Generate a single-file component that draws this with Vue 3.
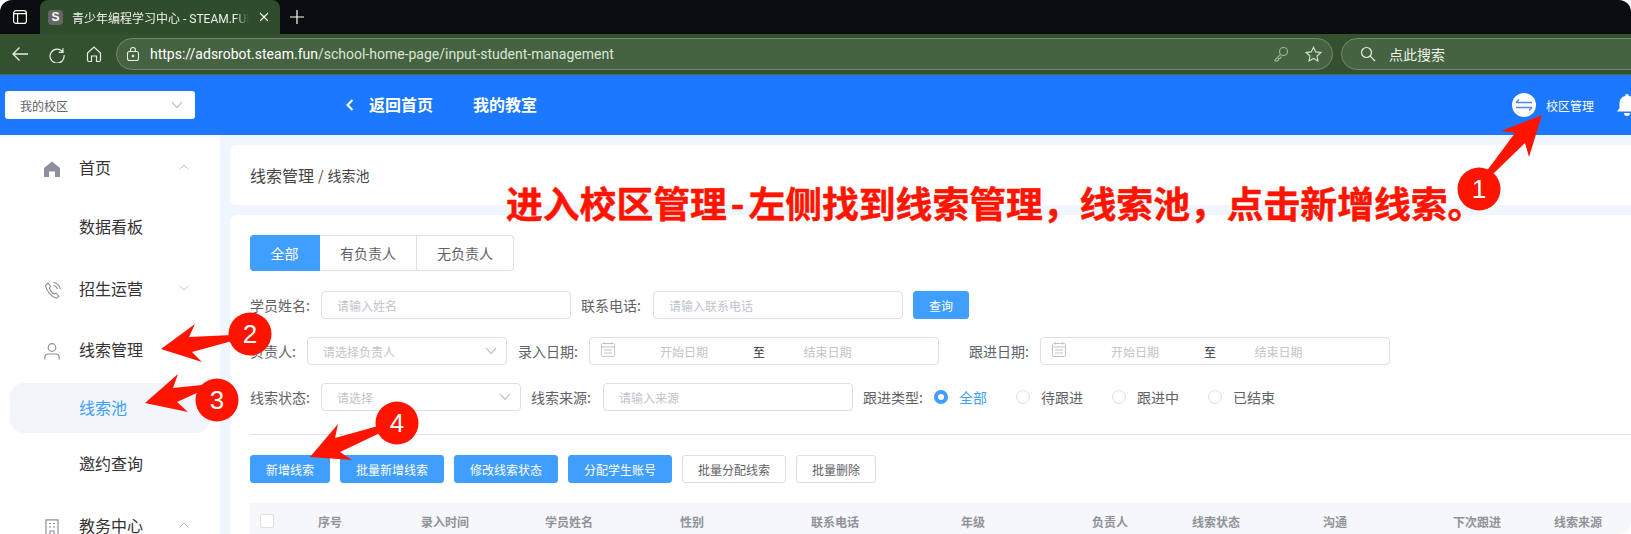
<script setup>
const menu = [
  { text: '首页', icon: 'home', arrow: 'up' },
  { text: '数据看板', sub: true },
  { text: '招生运营', icon: 'phone', arrow: 'down' },
  { text: '线索管理', icon: 'user' },
  { text: '线索池', sub: true, active: true },
  { text: '邀约查询', sub: true },
  { text: '教务中心', icon: 'building', arrow: 'up' }
]
const columns = ['序号', '录入时间', '学员姓名', '性别', '联系电话', '年级', '负责人', '线索状态', '沟通', '下次跟进', '线索来源']
const radios = ['全部', '待跟进', '跟进中', '已结束']
const primaryActions = ['新增线索', '批量新增线索', '修改线索状态', '分配学生账号']
const plainActions = ['批量分配线索', '批量删除']
const markers = [
  { n: 1, cx: 1479, cy: 189, arrow: '1542,115 1501,131 1515,133 1486,172 1494,173 1525,143 1529,157' },
  { n: 2, cx: 250, cy: 334, arrow: '161,349 195,324 189,337 232,335 232,341 192,352 202,362' },
  { n: 3, cx: 217, cy: 400, arrow: '145,403 178,374 173,388 202,385 199,392 177,402 188,412' },
  { n: 4, cx: 397, cy: 423, arrow: '310,457 338,424 335,438 378,426 380,433 340,452 352,460' }
]
</script>

<template>
  <div class="window">
    <div class="tabbar">
      <svg class="panel-icon" width="16" height="16" viewBox="0 0 16 16" fill="none" stroke="#fff" stroke-width="1.2">
        <rect x="1.6" y="1.6" width="12.8" height="12.8" rx="2.5" />
        <path d="M1.6 4.6h12.8M5.6 4.6v9.8" />
      </svg>
      <div class="tab">
        <span class="favicon">S</span>
        <span class="tab-title">青少年编程学习中心 - STEAM.FUN</span>
        <svg class="tab-close" width="10" height="10" viewBox="0 0 10 10" stroke="#fff" stroke-width="1.1"><path d="M1 1l8 8M9 1l-8 8" /></svg>
      </div>
      <svg class="tab-add" width="16" height="16" viewBox="0 0 16 16" stroke="#fff" stroke-width="1.2"><path d="M8 1v14M1 8h14" /></svg>
    </div>

    <div class="toolbar">
      <svg class="tool first" width="18" height="18" viewBox="0 0 18 18" fill="none" stroke="#e8ede6" stroke-width="1.3"><path d="M17 9H2M8.5 2.5L2 9l6.5 6.5" /></svg>
      <svg class="tool" width="18" height="18" viewBox="0 0 18 18" fill="none" stroke="#e8ede6" stroke-width="1.2"><path d="M15 3.2v4.2h-4.2M15 7.4A7 7 0 1 0 16 10" /></svg>
      <svg class="tool" width="18" height="18" viewBox="0 0 18 18" fill="none" stroke="#e8ede6" stroke-width="1.2"><path d="M2.5 8L9 2l6.5 6v7a1.5 1.5 0 0 1-1.5 1.5h-2.5V11h-5v5.500H4A1.500 1.500 0 0 1 2.500 15z" /></svg>
      <div class="address">
        <svg width="14" height="16" viewBox="0 0 14 16" fill="none" stroke="#e8ede6" stroke-width="1.1"><rect x="1.500" y="5.500" width="11" height="9" rx="2" /><path d="M4.500 5.500V4a2.500 2.500 0 0 1 5 0v1.500" /><circle cx="7" cy="10" r=".8" fill="#e8ede6" /></svg>
        <span class="url"><span class="url-strong">https://adsrobot.steam.fun</span>/school-home-page/input-student-management</span>
        <svg class="key" width="16" height="16" viewBox="0 0 16 16" fill="none" stroke="#a3b59f" stroke-width="1.100"><circle cx="10.500" cy="5.500" r="4" /><path d="M7.600 8.400L2 14v1h2.500l1-1v-1.500H7l1.500-2" /></svg>
        <svg class="star" width="17" height="17" viewBox="0 0 17 17" fill="none" stroke="#d8e0d5" stroke-width="1.100"><path d="M8.500 1.200l2.200 4.700 5.100.6-3.800 3.500 1 5-4.500-2.500L4 15l1-5L1.200 6.500l5.100-.6z" /></svg>
      </div>
      <div class="searchbox">
        <svg width="16" height="16" viewBox="0 0 16 16" fill="none" stroke="#e8ede6" stroke-width="1.200"><circle cx="6.500" cy="6.500" r="5" /><path d="M10.200 10.200L15 15" /></svg>
        <span>点此搜索</span>
      </div>
    </div>

    <header class="topbar">
      <div class="campus">
        <span>我的校区</span>
        <svg width="12" height="8" viewBox="0 0 12 8" fill="none" stroke="#c0c4cc" stroke-width="1.200"><path d="M1 1l5 5.500L11 1" /></svg>
      </div>
      <svg class="back" width="8" height="12" viewBox="0 0 8 12" fill="none" stroke="#fff" stroke-width="2"><path d="M6.500 1L1.500 6l5 5" /></svg>
      <span class="nav back-text">返回首页</span>
      <span class="nav">我的教室</span>
      <div class="top-right">
        <span class="swap">
          <svg width="18" height="14" viewBox="0 0 18 14" fill="none" stroke="#4f86e8" stroke-width="1.300"><path d="M1 4.500h16M1 4.500l3-3M17 9.500H1M17 9.500l-3 3" /></svg>
        </span>
        <span class="manage">校区管理</span>
        <svg class="bell" width="22" height="24" viewBox="0 0 22 24" fill="#fff"><path d="M11 1a2 2 0 0 1 2 2c4 1 5.500 4 5.500 8v4l2.500 3.500H1L3.500 15v-4c0-4 1.500-7 5.500-8a2 2 0 0 1 2-2zM8 20h6a3 3 0 0 1-6 0z" /></svg>
      </div>
    </header>

    <div class="body">
      <aside class="sidebar">
        <div v-for="item in menu" :key="item.text" class="menu-item" :class="{ active: item.active }">
          <span class="menu-icon">
            <svg v-if="item.icon === 'home'" width="16" height="16" viewBox="0 0 16 16" fill="#8c909c"><path d="M8 .5L16 7v9h-5v-5.500H5V16H0V7z" /></svg>
            <svg v-else-if="item.icon === 'phone'" width="18" height="18" viewBox="0 0 18 18" fill="none" stroke="#8c909c" stroke-width="1.100"><path d="M1.500 4.500L4 2l2.500 3.500-1 1.500c.5 2 3 5 5 6l1.500-.8 3 3-2.500 2C7.500 16 2 9.500 1.500 4.500z" /><path d="M9.500 1.500c3.500.5 6 3 6.700 6.500M9.500 4.500c2 .3 3.400 1.700 3.800 3.700" /></svg>
            <svg v-else-if="item.icon === 'user'" width="16" height="17" viewBox="0 0 16 17" fill="none" stroke="#8c909c" stroke-width="1.200"><circle cx="8" cy="4.500" r="3.800" /><path d="M.8 16.500v-2c0-2 1.500-3.500 3.500-3.500h7.400c2 0 3.500 1.500 3.500 3.500v2" /></svg>
            <svg v-else-if="item.icon === 'building'" width="16" height="17" viewBox="0 0 16 17" fill="none" stroke="#8c909c" stroke-width="1.200"><path d="M2 16.500V.8h12v15.700M0 16.500h16M5 4.500h2M9 4.500h2M5 8h2M9 8h2M6 16.500V12h4v4.500" /></svg>
          </span>
          <span class="menu-text">{{ item.text }}</span>
          <svg v-if="item.arrow" class="menu-arrow" width="10" height="6" viewBox="0 0 10 6" fill="none" stroke="#c0c4cc" stroke-width="1">
            <path :d="item.arrow === 'up' ? 'M.5 5.500L5 1l4.500 4.500' : 'M.5.500L5 5 9.500.500'" />
          </svg>
        </div>
      </aside>

      <main class="content">
        <div class="crumb"><span class="crumb-main">线索管理</span> / <span>线索池</span></div>
        <section class="panel">
          <div class="tabs">
            <span class="seg on">全部</span>
            <span class="seg">有负责人</span>
            <span class="seg">无负责人</span>
          </div>

          <div class="row">
            <label class="lbl">学员姓名:</label>
            <input class="field w250 after10" placeholder="请输入姓名" />
            <label class="lbl wide">联系电话:</label>
            <input class="field w250 after10" placeholder="请输入联系电话" />
            <button class="btn primary query">查询</button>
          </div>

          <div class="row">
            <label class="lbl short">负责人:</label>
            <div class="field select w200 after11"><span>请选择负责人</span><svg width="12" height="8" viewBox="0 0 12 8" fill="none" stroke="#c0c4cc" stroke-width="1.200"><path d="M1 1l5 5.500L11 1" /></svg></div>
            <label class="lbl">录入日期:</label>
            <div class="field date after30">
              <svg width="14" height="15" viewBox="0 0 14 15" fill="none" stroke="#c0c4cc" stroke-width="1"><rect x=".5" y="1.500" width="13" height="13" rx="1" /><path d="M.5 5h13M3.500 0v2.500M10.500 0v2.500M3 8h8M3 11h8" /></svg>
              <span class="d-start">开始日期</span><span class="d-to">至</span><span class="d-end">结束日期</span>
            </div>
            <label class="lbl">跟进日期:</label>
            <div class="field date">
              <svg width="14" height="15" viewBox="0 0 14 15" fill="none" stroke="#c0c4cc" stroke-width="1"><rect x=".5" y="1.500" width="13" height="13" rx="1" /><path d="M.5 5h13M3.500 0v2.500M10.500 0v2.500M3 8h8M3 11h8" /></svg>
              <span class="d-start">开始日期</span><span class="d-to">至</span><span class="d-end">结束日期</span>
            </div>
          </div>

          <div class="row">
            <label class="lbl">线索状态:</label>
            <div class="field select w200 after10"><span>请选择</span><svg width="12" height="8" viewBox="0 0 12 8" fill="none" stroke="#c0c4cc" stroke-width="1.200"><path d="M1 1l5 5.500L11 1" /></svg></div>
            <label class="lbl wide">线索来源:</label>
            <input class="field w250 after10" placeholder="请输入来源" />
            <label class="lbl">跟进类型:</label>
            <span v-for="(r, i) in radios" :key="r" class="radio" :class="{ checked: i === 0 }"><i class="dot"></i>{{ r }}</span>
          </div>

          <div class="divider"></div>

          <div class="actions">
            <button v-for="a in primaryActions" :key="a" class="btn primary">{{ a }}</button>
            <button v-for="a in plainActions" :key="a" class="btn">{{ a }}</button>
          </div>

          <div class="thead">
            <span class="cell"><i class="check"></i></span>
            <span v-for="c in columns" :key="c" class="cell">{{ c }}</span>
          </div>
        </section>
      </main>
    </div>

    <svg class="marks" width="1631" height="534" viewBox="0 0 1631 534">
      <g v-for="m in markers" :key="m.n">
        <polygon :points="m.arrow" fill="#ff1400" />
        <circle :cx="m.cx" :cy="m.cy" r="21.500" fill="#ff1400" />
        <text :x="m.cx" :y="m.cy + 9" text-anchor="middle" class="mark-num">{{ m.n }}</text>
      </g>
    </svg>
    <div class="headline">进入校区管理<span class="dash">-</span>左侧找到线索管理，线索池，点击新增线索。</div>
  </div>
</template>

<style scoped>
.window {
  position: relative;
  width: 1631px;
  height: 534px;
  overflow: hidden;
  border-radius: 12px;
  background: #fff;
  font-family: "Noto Sans CJK SC", "Noto Sans", sans-serif;
  color: #606266;
}
.tabbar {
  height: 34px;
  background: #090d10;
  display: flex;
  align-items: center;
}
.panel-icon { margin-left: 12px; margin-right: 12px; }
.tab {
  width: 240px;
  height: 34px;
  background: #2f4d2c;
  border-radius: 8px 8px 0 0;
  display: flex;
  align-items: center;
  padding-left: 8px;
  box-sizing: border-box;
  color: #eef2ec;
  font-size: 12px;
}
.favicon {
  width: 15px;
  height: 15px;
  flex: none;
  border-radius: 4px;
  background: #666;
  color: #fff;
  font: bold 12px/15px "Liberation Sans", sans-serif;
  text-align: center;
}
.tab-title {
  width: 177px;
  margin-left: 9px;
  white-space: nowrap;
  overflow: hidden;
  flex: none;
  font-family: "Roboto", "Noto Sans CJK SC", sans-serif;
  -webkit-mask-image: linear-gradient(to right, #000 92%, transparent);
  mask-image: linear-gradient(to right, #000 92%, transparent);
}
.tab-close { margin-left: 10px; }
.tab-add { margin-left: 9px; }
.toolbar {
  height: 41px;
  box-sizing: border-box;
  background: #34512f;
  border-bottom: 1px solid #4f6b48;
  display: flex;
  align-items: center;
}
.tool { margin-right: 19px; flex: none; }
.tool.first { margin-left: 11px; }
.address, .searchbox {
  height: 32px;
  box-sizing: border-box;
  background: #456340;
  border: 1px solid #71896c;
  border-radius: 16px;
  display: flex;
  align-items: center;
  color: #eef2ec;
}
.address {
  width: 1217px;
  margin-left: -6px;
  padding-left: 9px;
  font-size: 14px;
  font-family: "Roboto", sans-serif;
}
.url { margin-left: 10px; color: #dbe3d8; white-space: nowrap; }
.url-strong { color: #fff; }
.key { margin-left: auto; margin-right: 16px; }
.star { margin-right: 10px; }
.searchbox {
  flex: 1;
  margin-left: 8px;
  margin-right: -20px;
  padding-left: 18px;
  font-size: 14px;
}
.searchbox span { margin-left: 13px; }
.topbar {
  height: 60px;
  background: #1c78fe;
  display: flex;
  align-items: center;
  color: #fff;
}
.campus {
  width: 190px;
  height: 28px;
  margin-left: 5px;
  box-sizing: border-box;
  padding: 0 12px 0 15px;
  background: #fff;
  border-radius: 3px;
  display: flex;
  align-items: center;
  justify-content: space-between;
  color: #606266;
  font-size: 12px;
}
.back { margin-left: 151px; margin-right: 15px; }
.nav { font-size: 16px; font-weight: 700; margin-top: -2px; }
.back-text { margin-right: 40px; }
.top-right {
  margin-left: auto;
  margin-right: -7px;
  display: flex;
  align-items: center;
  flex: none;
}
.swap {
  width: 24px;
  height: 24px;
  border-radius: 50%;
  background: #fff;
  display: flex;
  align-items: center;
  justify-content: center;
}
.manage { font-size: 12px; margin-left: 10px; margin-right: 22px; }
.body { display: flex; height: 399px; background: #f0f6fe; }
.sidebar {
  width: 220px;
  flex: none;
  box-sizing: border-box;
  padding-top: 2px;
  background: #fff;
  display: grid;
  grid-template-rows: 59px 59px 66px 56px 56px 60px 64px;
  align-content: start;
}
.menu-item {
  display: flex;
  align-items: center;
  color: #333;
  font-size: 16px;
  margin: 0 10px;
  position: relative;
}
.menu-item.active {
  margin-top: 6px;
  padding-bottom: 3px;
  box-sizing: border-box;
  background: #f2f6fb;
  border-radius: 14px;
  color: #409eff;
}
.menu-icon { width: 35px; margin-left: 34px; flex: none; display: flex; align-items: center; margin-top: 4px; }
.menu-arrow { position: absolute; left: 169px; top: calc(50% - 3px); }
.content { flex: 1; min-width: 0; padding: 10px 0 0 10px; }
.crumb {
  height: 60px;
  box-sizing: border-box;
  background: #fff;
  border-radius: 6px 0 0 6px;
  padding-left: 20px;
  display: flex;
  align-items: center;
  gap: 4px;
  color: #444;
  font-size: 14px;
}
.crumb-main { font-size: 16px; }
.panel {
  margin-top: 10px;
  height: 340px;
  background: #fff;
  border-radius: 6px 0 0 0;
  padding: 20px 0 0 20px;
  box-sizing: border-box;
}
.tabs { display: flex; }
.seg {
  height: 36px;
  box-sizing: border-box;
  padding: 0 20px;
  border: 1px solid #dcdfe6;
  border-left: 0;
  font-size: 14px;
  display: flex;
  align-items: center;
  justify-content: center;
  color: #606266;
}
.seg:last-child { border-radius: 0 4px 4px 0; }
.seg.on {
  width: 70px;
  padding: 0;
  background: #409eff;
  border-color: #409eff;
  color: #fff;
  border-radius: 4px 0 0 4px;
}
.row { display: flex; align-items: center; height: 28px; margin-top: 18px; }
.tabs + .row { margin-top: 20px; }
.lbl { width: 59px; margin-right: 12px; font-size: 14px; white-space: nowrap; color: #606266; flex: none; }
.lbl.short { width: 45px; }
.lbl.wide { margin-right: 13px; }
.field {
  height: 28px;
  box-sizing: border-box;
  border: 1px solid #dcdfe6;
  border-radius: 4px;
  background: #fff;
  padding: 0 15px;
  font: 12px "Noto Sans CJK SC", sans-serif;
  color: #c0c4cc;
  flex: none;
  outline: none;
}
.field::placeholder { color: #c0c4cc; opacity: 1; }
.w250 { width: 250px; }
.w200 { width: 200px; }
.after10 { margin-right: 10px; }
.after11 { margin-right: 11px; }
.after30 { margin-right: 30px; }
.select { display: flex; align-items: center; justify-content: space-between; padding-right: 9px; }
.date { width: 350px; display: flex; align-items: center; padding: 0 0 0 11px; }
.date svg { flex: none; margin-top: -3px; }
.d-start { width: 138px; text-align: center; }
.d-to { width: 11px; text-align: center; color: #303133; }
.d-end { width: 127px; text-align: center; }
.radio {
  display: inline-flex;
  align-items: center;
  font-size: 14px;
  color: #606266;
  margin-right: 29px;
}
.dot {
  width: 14px;
  height: 14px;
  box-sizing: border-box;
  border: 1px solid #dcdfe6;
  border-radius: 50%;
  margin-right: 11px;
  background: #fff;
}
.radio.checked { color: #409eff; }
.radio.checked .dot { border: 4.500px solid #409eff; }
.divider { height: 1px; background: #e0e3ea; margin-top: 23px; }
.actions { display: flex; gap: 10px; margin-top: 20px; }
.btn {
  height: 28px;
  padding: 0 15px;
  border: 1px solid #dcdfe6;
  border-radius: 3px;
  background: #fff;
  color: #606266;
  font: 12px "Noto Sans CJK SC", sans-serif;
  white-space: nowrap;
}
.btn.primary { background: #409eff; border-color: #409eff; color: #fff; }
.query { padding: 0; width: 56px; }
.thead {
  margin-top: 20px;
  height: 48px;
  background: #f5f7fa;
  display: grid;
  grid-template-columns: 34px 92px 138px 110px 136px 150px 126px 148px 64px 174px 110px 92px 1fr;
  padding-top: 8px;
  box-sizing: border-box;
}
.cell { text-align: center; font-size: 12px; font-weight: 700; color: #909399; line-height: 22px; }
.check {
  display: block;
  width: 14px;
  height: 14px;
  margin: 3px auto 0;
  box-sizing: border-box;
  border: 1px solid #dcdfe6;
  border-radius: 2px;
  background: #fff;
}
.marks { position: absolute; left: 0; top: 0; pointer-events: none; }
.mark-num { fill: #fff; font: 400 26px "Liberation Sans", sans-serif; }
.headline {
  position: absolute;
  left: 506px;
  top: 180px;
  font-size: 36.800px;
  line-height: 44px;
  font-weight: 700;
  -webkit-text-stroke: 0.5px #ff1400;
  color: #ff1400;
  white-space: nowrap;
}
.dash { margin: 0 4px; }
</style>

<style>
html, body { background: #fff; }
</style>
